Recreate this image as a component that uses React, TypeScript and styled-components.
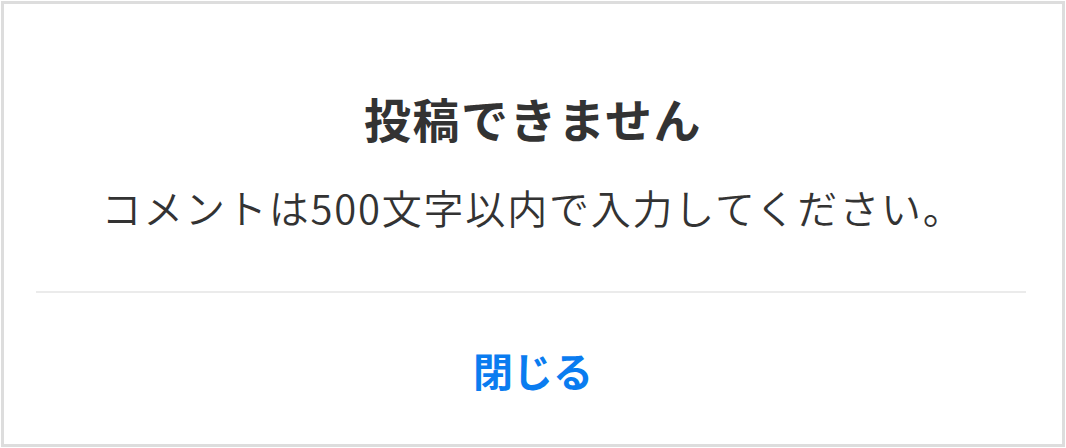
import styled, { createGlobalStyle } from "styled-components";

const Global = createGlobalStyle`
  html, body {
    margin: 0;
    padding: 0;
    background: #ffffff;
  }
  body {
    font-family: "Noto Sans CJK JP", "Noto Sans", sans-serif;
  }
`;

const Frame = styled.div`
  box-sizing: border-box;
  margin: 1px;
  height: 446px;
  border: 3px solid #dddddd;
  background: #ffffff;
  display: flex;
  flex-direction: column;
`;

const Body = styled.div`
  display: flex;
  flex-direction: column;
  align-items: center;
  height: 287px;
  box-sizing: border-box;
  padding: 88px 32px 0;
`;

const Title = styled.div`
  font-size: 47px;
  font-weight: 700;
  letter-spacing: 1.5px;
  color: #333333;
  line-height: 52px;
`;

const Message = styled.div`
  margin-top: 37px;
  font-size: 40px;
  font-weight: 350;
  letter-spacing: 1.8px;
  color: #333333;
  line-height: 52px;
  white-space: nowrap;
`;

const Divider = styled.hr`
  margin: 0 36px 0 32px;
  border: none;
  height: 2px;
  background: #ebebeb;
`;

const Action = styled.button`
  flex: 1;
  border: none;
  background: none;
  padding: 2px 0 0;
  font-family: inherit;
  font-size: 40px;
  font-weight: 700;
  color: #0a7cf0;
  cursor: pointer;
`;

export default function App() {
  return (
    <>
      <Global />
      <Frame>
        <Body>
          <Title>投稿できません</Title>
          <Message>コメントは500文字以内で入力してください。</Message>
        </Body>
        <Divider />
        <Action>閉じる</Action>
      </Frame>
    </>
  );
}
